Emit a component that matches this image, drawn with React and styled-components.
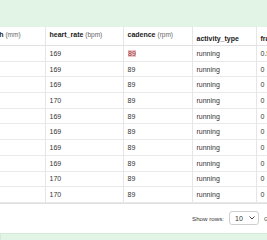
import React from "react";
import styled, { createGlobalStyle } from "styled-components";

const Global = createGlobalStyle`
  html, body { margin: 0; padding: 0; background: #fff; }
  body { font-family: "Liberation Sans", Arial, sans-serif; overflow: hidden; }
`;

const Page = styled.div`
  width: 267px;
  height: 240px;
  overflow: hidden;
  display: flex;
  flex-direction: column;
  background: #fff;
`;

const Band = styled.div`
  flex: none;
  height: ${(p) => p.$h}px;
  background: #e1f4e5;
  border-top: ${(p) => (p.$top ? "1px solid #d3ecd9" : "none")};
  border-left: ${(p) => (p.$top ? "1px solid #d3ecd9" : "none")};
`;

const TableWrap = styled.div`
  flex: none;
  overflow: hidden;
`;

const Table = styled.div`
  width: 381px;
  margin-left: -44px;
  border-bottom: 1px solid #dedede;
`;

const COLS = "90px 78px 69px 64px 80px";

const HeaderRow = styled.div`
  display: grid;
  grid-template-columns: ${COLS};
  height: 19px;
  box-sizing: border-box;
  border-bottom: 1px solid #e2e2e2;
`;

const Row = styled.div`
  display: grid;
  grid-template-columns: ${COLS};
  height: 15.7px;
  box-sizing: border-box;
  border-bottom: 1px solid #e9e9e9;
`;

const HeadCell = styled.div`
  box-sizing: border-box;
  padding: ${(p) => p.$pt}px 3.5px 0;
  border-right: 1px solid #e6e6e6;
  white-space: nowrap;
  overflow: hidden;
  font-size: 7px;
  line-height: 8px;
  color: #222;
`;

const Name = styled.span`
  font-weight: 700;
`;

const Unit = styled.span`
  font-size: 6.5px;
  color: #666;
  font-weight: 400;
`;

const Cell = styled.div`
  box-sizing: border-box;
  display: flex;
  align-items: center;
  padding: 0 3.5px;
  border-right: 1px solid #e6e6e6;
  white-space: nowrap;
  overflow: hidden;
  font-size: 7px;
  color: #333;
`;

const Mark = styled.span`
  background: #f5c4c8;
  color: #8a3a3a;
  padding: 0 0.5px;
`;

const Footer = styled.div`
  flex: none;
  height: 29px;
  display: flex;
  align-items: center;
  gap: 5px;
  padding-left: 192px;
  white-space: nowrap;
`;

const Label = styled.span`
  font-size: 6.2px;
  color: #333;
`;

const Select = styled.div`
  flex: none;
  width: 30px;
  height: 14px;
  box-sizing: border-box;
  border: 1px solid #cfcfcf;
  border-radius: 3px;
  display: flex;
  align-items: center;
  justify-content: space-between;
  padding: 0 3px 0 5px;
  font-size: 7px;
  color: #333;
  background: #fff;
`;

const Spacer = styled.div`
  flex: 1;
`;

const Chevron = () => (
  <svg width="6" height="4" viewBox="0 0 6 4">
    <path d="M0.8 0.8 L3 3 L5.2 0.8" fill="none" stroke="#444" strokeWidth="1" strokeLinecap="round" strokeLinejoin="round" />
  </svg>
);

const heart = [169, 169, 169, 170, 169, 169, 169, 169, 170, 170];

export default function App() {
  return (
    <>
      <Global />
      <Page>
        <Band $h={27} />
        <TableWrap>
          <Table>
            <HeaderRow>
              <HeadCell $pt={4}>
                <Name>stride_length</Name> <Unit>(mm)</Unit>
              </HeadCell>
              <HeadCell $pt={4}>
                <Name>heart_rate</Name> <Unit>(bpm)</Unit>
              </HeadCell>
              <HeadCell $pt={4}>
                <Name>cadence</Name> <Unit>(rpm)</Unit>
              </HeadCell>
              <HeadCell $pt={7.5}>
                <Name>activity_type</Name>
              </HeadCell>
              <HeadCell $pt={7.5}>
                <Name>fractional_cadence</Name>
              </HeadCell>
            </HeaderRow>
            {heart.map((h, i) => (
              <Row key={i}>
                <Cell />
                <Cell>{h}</Cell>
                <Cell>{i === 0 ? <Mark>89</Mark> : "89"}</Cell>
                <Cell>running</Cell>
                <Cell>{i === 0 ? "0.5" : "0"}</Cell>
              </Row>
            ))}
          </Table>
        </TableWrap>
        <Footer>
          <Label>Show rows:</Label>
          <Select>
            <span>10</span>
            <Chevron />
          </Select>
          <Label>Go to page:</Label>
        </Footer>
        <Spacer />
        <Band $h={7} $top />
      </Page>
    </>
  );
}
